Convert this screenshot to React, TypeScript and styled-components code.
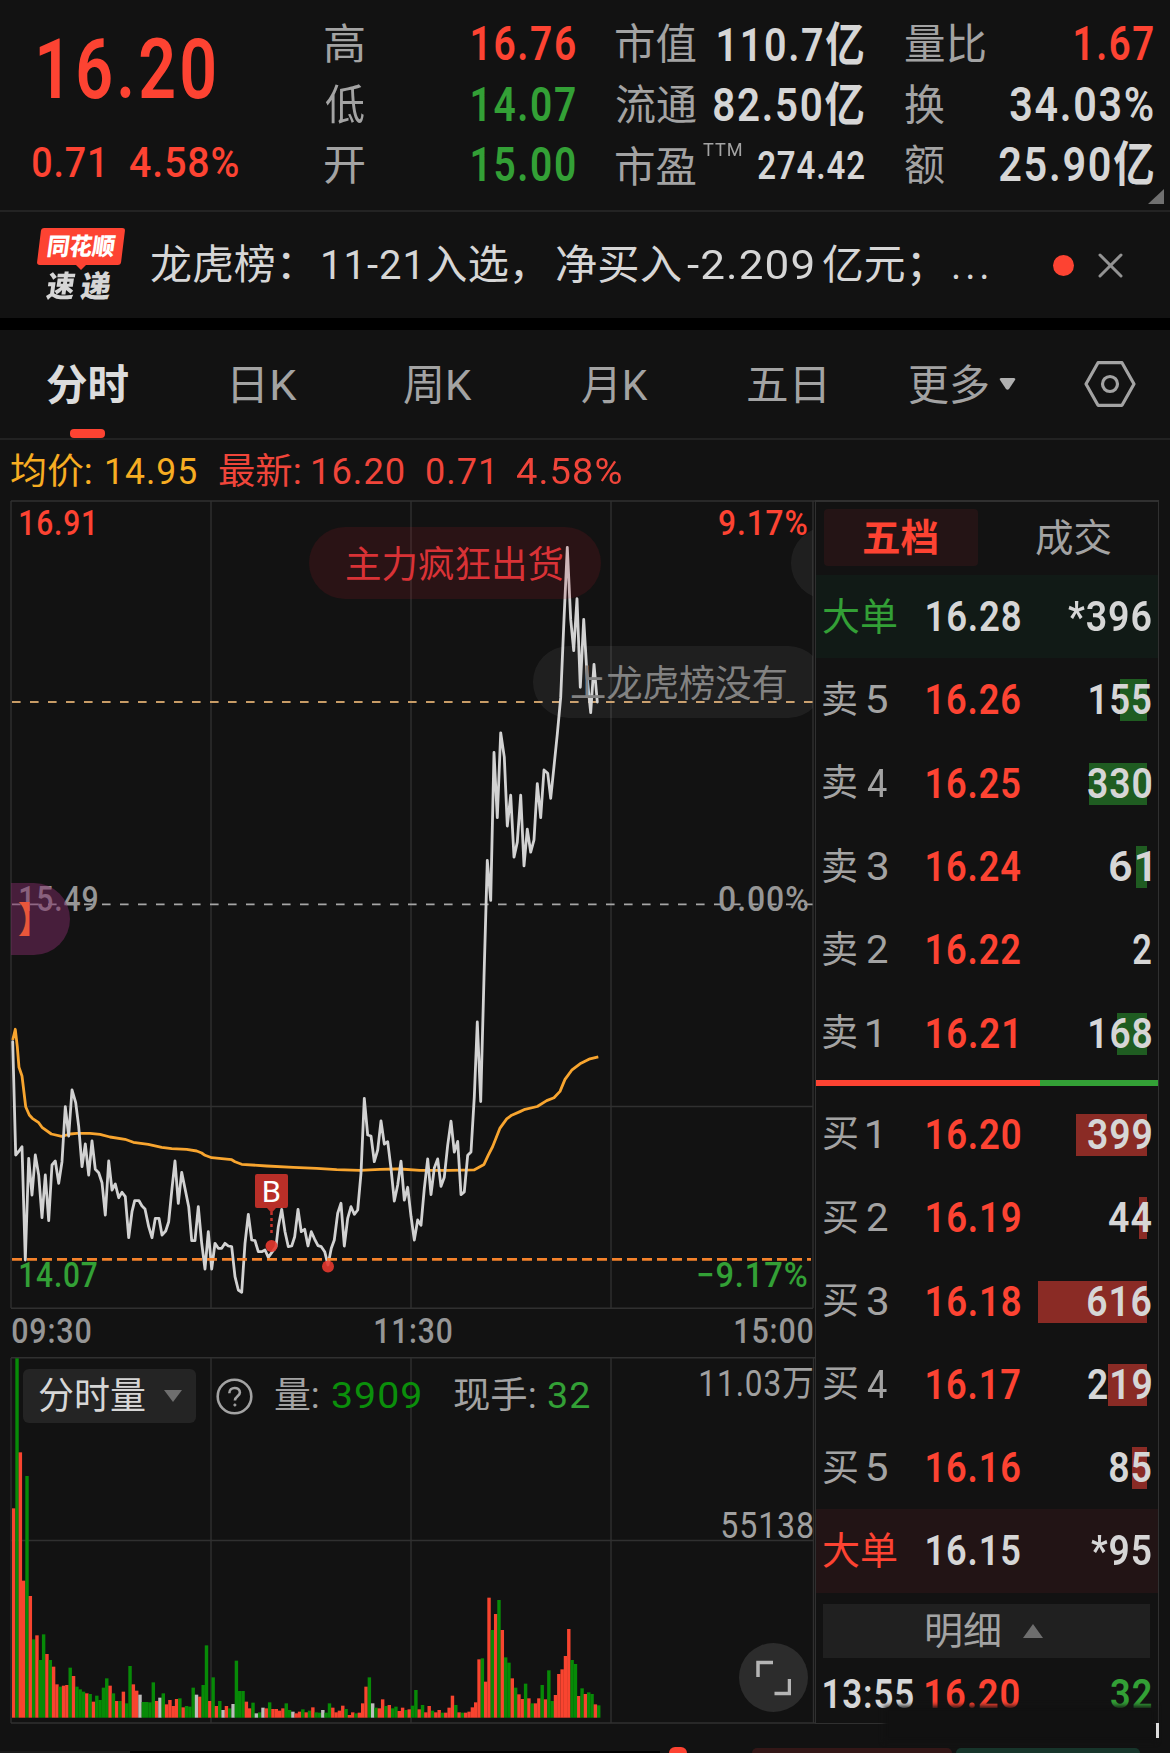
import React, { useLayoutEffect, useRef, useState } from "react";
import styled, { createGlobalStyle } from "styled-components";

const FONT = 'Roboto, "Noto Sans CJK SC", sans-serif';
const RED = "#fd4332";
const GREEN = "#33a036";
const LIGHT = "#d6d6d6";
const GRAY = "#a3a3a3";

const GlobalStyle = createGlobalStyle`
  * { box-sizing: border-box; }
  html, body { margin: 0; background: #121212; }
  body { font-family: ${FONT}; overflow: hidden; }
`;

/* ---------- condensed text fitted to a given ink width ---------- */

const FitBox = styled.span<{ $w: number; $size: number }>`
  display: block;
  flex: none;
  width: ${(p) => p.$w}px;
  height: ${(p) => p.$size}px;
  white-space: pre;
`;

const FitInk = styled.span<{ $size: number; $weight: number; $color: string; $ls: number }>`
  display: inline-block;
  transform-origin: 0 50%;
  font-size: ${(p) => p.$size}px;
  line-height: ${(p) => p.$size}px;
  font-weight: ${(p) => p.$weight};
  letter-spacing: ${(p) => p.$ls}px;
  color: ${(p) => p.$color};
`;

type TxtProps = { t: string; w: number; size?: number; weight?: number; color?: string; ls?: number };

function Txt({ t, w, size = 42, weight = 400, color = LIGHT, ls = 0 }: TxtProps) {
  const ref = useRef<HTMLSpanElement>(null);
  const [transform, setTransform] = useState("none");
  useLayoutEffect(() => {
    const ctx = document.createElement("canvas").getContext("2d") as any;
    ctx.font = `${weight} ${size}px ${FONT}`;
    ctx.letterSpacing = `${ls}px`;
    const m = ctx.measureText(t);
    const ink = m.actualBoundingBoxRight + m.actualBoundingBoxLeft;
    const s = w / ink;
    setTransform(`translateX(${m.actualBoundingBoxLeft * s}px) scaleX(${s})`);
  }, [t, w, size, weight, ls]);
  return (
    <FitBox $w={w} $size={size}>
      <FitInk ref={ref} $size={size} $weight={weight} $color={color} $ls={ls} style={{ transform }}>
        {t}
      </FitInk>
    </FitBox>
  );
}

/* ---------- page ---------- */

const Page = styled.div`
  width: 1170px;
  height: 1753px;
  overflow: hidden;
  background: #121212;
  display: flex;
  flex-direction: column;
`;

/* ---------- quote header ---------- */

const Header = styled.header`
  position: relative;
  height: 212px;
  flex: none;
  display: grid;
  grid-template-columns: 284px 250px 248px 248px;
  column-gap: 41px;
  padding-top: 14px;
  border-bottom: 2px solid #232323;
`;

const PriceBlock = styled.div`
  display: flex;
  flex-direction: column;
  padding: 14px 0 0 39px;
  gap: 29px;
`;

const ChangeRow = styled.div`
  display: flex;
  gap: 28px;
  margin-left: -6px;
`;

const StatCol = styled.div`
  display: flex;
  flex-direction: column;
`;

const StatRow = styled.div<{ $drop?: number }>`
  height: 60.5px;
  padding-top: ${(p) => p.$drop || 0}px;
  display: flex;
  align-items: center;
  justify-content: space-between;
  > :first-child {
    margin-top: 2px;
  }
`;

const Label = styled.div`
  display: flex;
  align-items: flex-start;
  gap: 7px;
`;

const Sup = styled.div`
  margin-top: -7px;
`;

const Corner = styled.svg`
  position: absolute;
  right: 6px;
  bottom: 6px;
`;

/* ---------- news strip ---------- */

const News = styled.section`
  height: 118px;
  flex: none;
  display: flex;
  align-items: center;
  padding-left: 37px;
  border-bottom: 12px solid #000;
`;

const Brand = styled.div`
  width: 88px;
  height: 74px;
  margin-right: 26px;
  display: flex;
  flex-direction: column;
`;

const BrandTop = styled.div`
  position: relative;
  height: 37px;
  display: flex;
  align-items: center;
  justify-content: center;
  &::before {
    content: "";
    position: absolute;
    inset: 0 2px;
    border-radius: 3px;
    background: ${RED};
    transform: skewX(-7deg);
  }
  &::after {
    content: "";
    position: absolute;
    left: 38px;
    top: 36px;
    border: 6px solid transparent;
    border-top-color: ${RED};
    border-bottom: 0;
  }
`;

const Slant = styled.div`
  position: relative;
  z-index: 1;
  transform: skewX(-8deg);
`;

const BrandBottom = styled.div`
  display: flex;
  gap: 6px;
  padding: 7px 0 0 10px;
`;

const Headline = styled.div`
  display: flex;
  width: 902px;
  align-items: center;
`;

const Gap = styled.i<{ $w: number }>`
  flex: none;
  width: ${(p) => p.$w}px;
`;

const Dot = styled.i`
  width: 21px;
  height: 21px;
  border-radius: 50%;
  background: ${RED};
  margin-right: 24px;
`;

/* ---------- period tabs ---------- */

const Tabs = styled.nav`
  height: 110px;
  flex: none;
  display: flex;
  padding-left: 47px;
  align-items: stretch;
  border-bottom: 2px solid #222;
`;

const Tab = styled.div<{ $gap: number }>`
  position: relative;
  display: flex;
  align-items: center;
  gap: 11px;
  margin-right: ${(p) => p.$gap}px;
  > span {
    margin-top: 4px;
  }
`;

const Underline = styled.i`
  position: absolute;
  left: 23px;
  bottom: 0;
  width: 35px;
  height: 9px;
  border-radius: 4px;
  background: ${RED};
`;

const Legend = styled.div`
  height: 60px;
  flex: none;
  display: flex;
  align-items: center;
  padding: 3px 0 0 11px;
`;

/* ---------- board ---------- */

const Board = styled.main`
  display: flex;
  height: 1224px;
  flex: none;
`;

const ChartCol = styled.section`
  width: 815px;
  flex: none;
`;

const Plot = styled.div<{ $h: number }>`
  position: relative;
  height: ${(p) => p.$h}px;
  overflow: hidden;
  svg { display: block; }
`;

const Mark = styled.div<{ $x: number; $y: number }>`
  position: absolute;
  left: ${(p) => p.$x}px;
  top: ${(p) => p.$y}px;
  transform: translateY(-50%);
`;

const Danmu = styled.div<{ $x: number; $y: number; $w: number; $bg: string; $pad: number }>`
  position: absolute;
  left: ${(p) => p.$x}px;
  top: ${(p) => p.$y}px;
  width: ${(p) => p.$w}px;
  height: 72px;
  border-radius: 36px;
  padding: 4px 0 0 ${(p) => p.$pad}px;
  display: flex;
  align-items: center;
  background: ${(p) => p.$bg};
`;

const DanmuLayer = styled.div`
  position: absolute;
  left: 11px;
  top: 0;
  width: 802px;
  height: 808px;
  overflow: hidden;
`;

const TimeAxis = styled.div`
  height: 48px;
  display: flex;
  align-items: center;
  justify-content: space-between;
  padding: 0 2px 3px 12px;
`;

const VolumeBar = styled.div`
  position: absolute;
  left: 23px;
  top: 12px;
  height: 54px;
  display: flex;
  align-items: center;
`;

const Picker = styled.div`
  width: 173px;
  height: 54px;
  border-radius: 6px;
  background: #242424;
  display: flex;
  align-items: center;
  justify-content: space-between;
  padding: 0 14px 0 16px;
  margin-right: 20px;
`;

const Expand = styled.div`
  position: absolute;
  left: 739px;
  top: 286px;
  width: 69px;
  height: 69px;
  border-radius: 50%;
  background: #2c2c2c;
  display: grid;
  place-items: center;
`;

/* ---------- order book ---------- */

const Book = styled.aside`
  position: relative;
  width: 344px;
  border: 1px solid #303030;
  border-top-width: 2px;
  border-left-width: 1px;
`;

const BookTabs = styled.div`
  display: flex;
  height: 73px;
  padding: 7px 0 0 8px;
`;

const BookTab = styled.div<{ $on?: boolean }>`
  flex: none;
  width: ${(p) => (p.$on ? 154 : 190)}px;
  height: 57px;
  border-radius: 4px;
  background: ${(p) => (p.$on ? "#241415" : "transparent")};
  display: flex;
  align-items: center;
  justify-content: center;
`;

const BookRow = styled.div<{ $bg?: string }>`
  height: 83.3px;
  display: grid;
  grid-template-columns: 104px 94px 1fr;
  align-items: center;
  padding: 1px 7px 0 7px;
  background: ${(p) => p.$bg || "transparent"};
`;

const LevelName = styled.div`
  display: flex;
  align-items: center;
  gap: 10px;
`;

const Qty = styled.div`
  position: relative;
  height: 42px;
  display: flex;
  align-items: center;
  justify-content: flex-end;
`;

const Depth = styled.i<{ $color: string }>`
  position: absolute;
  right: 4px;
  top: 0;
  height: 42px;
  background: ${(p) => p.$color};
`;

const Over = styled.div`
  position: relative;
`;

const Ratio = styled.div`
  height: 6px;
  margin: 5px 0 7px;
  display: flex;
  background: ${GREEN};
  &::before {
    content: "";
    width: 224px;
    background: ${RED};
  }
`;

const Detail = styled.div`
  height: 54px;
  margin: 11px 8px 16px 7px;
  background: #202020;
  display: flex;
  align-items: center;
  justify-content: center;
  gap: 23px;
  padding-right: 4px;
`;

const TradeRow = styled.div`
  display: flex;
  align-items: center;
  padding: 0 7px 0 8px;
`;

const Smudge = styled.div`
  position: absolute;
  left: 68px;
  top: 1204px;
  width: 272px;
  height: 36px;
  background: #111;
  filter: blur(2.5px);
`;

const Tick = styled.i`
  position: absolute;
  left: 340px;
  top: 1221px;
  width: 3px;
  height: 15px;
  background: #ddd;
`;

/* ---------- bottom bar ---------- */

const Bottom = styled.footer`
  position: relative;
  z-index: 2;
  display: flex;
  align-items: flex-end;
  height: 29px;
  flex: none;
`;

const Stub = styled.i<{ $w: number; $h: number; $c: string; $ml?: number; $r?: number }>`
  width: ${(p) => p.$w}px;
  height: ${(p) => p.$h}px;
  margin-left: ${(p) => p.$ml || 0}px;
  background: ${(p) => p.$c};
  border-radius: ${(p) => p.$r || 0}px ${(p) => p.$r || 0}px 0 0;
`;

/* ---------- chart data ---------- */

const EARLY = "38,545 47,885 57,873 66,860 76,1200 86,895 96,1005 106,885 116,945 126,1073 136,945 146,1082 156,915 166,903 176,970 186,905 196,740 206,828 216,690 227,728 236,800 246,920 256,852 266,945 276,843 286,928 296,938 306,968 316,1065 326,903 336,990 346,972 356,1013 366,997 376,1010 386,1133 396,1055 404,1022 417,1022 426,1038 435,1047 446,1100 456,1133 466,1075 477,1075 486,1125 497,1113 506,1085 516,985 525,903 535,1030 545,937 556,990 566,1040 575,1142 585,1142 595,1040 605,1150 615,1227 625,1115 635,1227 645,1150 655,1165 665,1165 675,1150 685,1158 695,1160 705,1250 715,1290 725,1297 735,1150 745,1063 755,1140 765,1142 775,1175 785,1175 795,1170 805,1192 815,1178 828,1160 835,1100 845,1048 855,1115 865,1160 875,1158 884,1130 894,1048 904,1115 914,1108 924,1158 934,1115 944,1138 954,1157 964,1160 974,1175 984,1215 994,1165 1003,1140 1013,1060 1023,1030 1033,1158 1043,1075 1053,1040 1063,1063 1073,1050 1083,940 1093,715 1103,825 1113,828 1123,905 1133,870 1143,783 1153,852 1163,845 1173,925 1183,1023 1193,975";
const LATE = "3,1440 13,1525 23,1497 33,1560 43,1612 53,1568 63,1580 73,1500 83,1435 93,1513 103,1455 113,1435 123,1495 133,1475 143,1405 153,1353 163,1420 173,1397 183,1513 193,1507 203,1427 213,1420 223,1300 232,1137 242,1310 252,1040 262,785 272,872 282,550 292,692 302,507 313,560 322,710 332,643 342,778 352,745 362,643 372,797 382,717 392,767 402,740 412,618 422,692 432,588 443,595 452,650 462,580 472,510 482,430 492,260 502,103 512,260 521,328 531,215 541,408 551,260 562,390 572,463 582,358 592,440";
const AVG_EARLY = "38,540 46,508 52,560 57,622 66,648 77,740 88,765 97,775 116,788 126,802 154,822 185,829 210,822 230,820 270,820 300,823 330,831 375,838 400,847 445,853 485,862 515,866 560,868 590,873 605,879 615,886 635,893 695,899 705,905 725,913 800,918 880,922 950,925 1010,929 1080,931 1140,928 1190,927";
const AVG_LATE = "0,1457 60,1460 150,1460 222,1459 252,1447 265,1427 278,1408 300,1368 320,1348 335,1340 360,1332 375,1327 412,1321 440,1308 462,1302 480,1288 495,1262 515,1242 540,1228 570,1217 595,1213";

const series = (early: string, late: string) => {
  const map = (s: string, f: (x: number, y: number) => [number, number]) =>
    s.split(" ").map((p) => {
      const [x, y] = p.split(",").map(Number);
      return f(x, y).map((n) => n.toFixed(1)).join(",");
    });
  return [
    ...map(early, (x, y) => [x / 3, y / 3 + 360]),
    ...map(late, (x, y) => [x / 3 + 400, y / 2.178]),
  ].join(" ");
};

const VOLUMES = "r505 g55 r337 r722 g408 r768 g898 r886 g960 g883 r942 g960 r980 r1033 g1040 r1037 r1035 g983 r1008 g1040 g1048 g1055 r1060 g1062 r1085 g1067 g1080 g1043 g1015 r1037 g1060 r1083 g1083 r1055 g1090 g978 r1033 r1052 w1064 g1086 g1086 g1087 g1027 r1083 w1073 g1060 r1093 r1080 r1098 r1077 g1075 r1102 g1098 g1100 g1043 w1064 r1070 g1035 g916 r1083 g1012 r1098 g1083 w1110 r1098 g1105 w1092 g962 g1053 g1053 r1085 r1105 g1088 w1120 g1117 w1103 r1105 g1087 r1107 r1107 r1112 r1105 g1090 g1110 w1115 r1120 r1115 g1108 r1117 g1112 r1102 g1117 g1118 w1110 g1118 g1090 r1103 r1117 r1112 r1097 g1107 r1125 r1117 g1120 r1118 r1090 r1040 g1012 w1090 g1103 r1105 r1078 g1098 r1095 g1105 g1100 r1113 r1103 g1110 r1108 g1097 g1050 r1108 g1095 r1117 r1098 g1112 r1117 r1110 g1118 r1118 r1103 r1067 g1095 r1117 g1118 r1118 r1115 r1102 r1087 r958 g955 r1025 r773 g870 r822 g780 r870 g952 g968 r1015 g1043 r1063 r1077 g1031 r1075 g1090 r1090 r1075 g1035 r1078 g991 g1083 r1065 r1002 r988 r948 r867 g960 g972 r1068 g1045 r1062 g1057 g1062 r1093 g1096".split(" ");
const VOL_STEP = (1791 - 36) / 3 / (VOLUMES.length - 1);
const VOL_COLORS: Record<string, string> = { r: "#f8442f", g: "#078a07", w: "#bdbdbd" };

const SELLS: [string, string, number, number][] = [
  ["5", "16.26", 155, 61],
  ["4", "16.25", 330, 63],
  ["3", "16.24", 61, 41],
  ["2", "16.22", 2, 18],
  ["1", "16.21", 168, 61],
];
const BUYS: [string, string, number, number][] = [
  ["1", "16.20", 399, 63],
  ["2", "16.19", 44, 42],
  ["3", "16.18", 616, 63],
  ["4", "16.17", 219, 63],
  ["5", "16.16", 85, 41],
];

function Level({ side, row }: { side: string; row: [string, string, number, number] }) {
  const [n, price, qty, w] = row;
  return (
    <BookRow>
      <LevelName>
        <Txt t={side} w={34} size={37} color={GRAY} />
        <Txt t={n} w={n === "1" ? 12 : 20} size={38} color={GRAY} />
      </LevelName>
      <Txt t={price} w={price.endsWith("1") ? 89 : 93} size={42} weight={600} color={RED} ls={1} />
      <Qty>
        {qty > 2 && <Depth $color={side === "卖" ? "#1f5c21" : "#8a2b25"} style={{ width: qty * 0.177 }} />}
        <Over>
          <Txt t={String(qty)} w={w} size={42} weight={600} ls={1} />
        </Over>
      </Qty>
    </BookRow>
  );
}

function BigOrder({ color, bg, price, qty, w }: { color: string; bg: string; price: string; qty: string; w: number }) {
  return (
    <BookRow $bg={bg}>
      <Txt t="大单" w={74} size={38} color={color} />
      <Txt t={price} w={93} size={42} weight={600} ls={1} />
      <Qty>
        <Txt t={qty} w={w} size={42} weight={600} ls={1} />
      </Qty>
    </BookRow>
  );
}

const grid = { stroke: "#303030", strokeWidth: 1.4 };

function PriceChart() {
  return (
    <Plot $h={809}>
      <svg width="815" height="809" fill="none">
        <path d="M11 1H815M11 808.3H813M11 1V808M211 1V808M411 1V808M611 1V808M813 1V808M11 606.5H813" {...grid} />
        <path d="M12 202H813" stroke="#c89c66" strokeWidth="1.8" strokeDasharray="8.6 9.4" />
        <path d="M12 404.4H813" stroke="#a6a6a6" strokeWidth="1.7" strokeDasharray="8.6 9.4" />
        <polyline points={series(AVG_EARLY, AVG_LATE)} stroke="#f8a52f" strokeWidth="2.8" strokeLinejoin="round" />
        <polyline points={series(EARLY, LATE)} stroke="#d2d2d2" strokeWidth="2.8" strokeLinejoin="round" strokeLinecap="round" />
        <path d="M12 759.3H811" stroke="#f5822b" strokeWidth="2.8" strokeDasharray="10 5" />
        <path d="M271.5 712V736" stroke="#c5342c" strokeWidth="2.5" strokeDasharray="3 3" />
        <path d="M257 674H286Q288 674 288 676V705Q288 708 286 708H276L271.5 713L267 708H257Q255 708 255 706V676Q255 674 257 674Z" fill="#b92f28" />
        <circle cx="271.5" cy="746" r="6" fill="#e5382f" fillOpacity="0.9" />
        <circle cx="328" cy="766.5" r="6" fill="#e5382f" fillOpacity="0.9" />
      </svg>
      <Mark $x={20} $y={22.5}><Txt t="16.91" w={73} size={35} weight={500} color={RED} ls={1} /></Mark>
      <Mark $x={719} $y={22.5}><Txt t="9.17%" w={88} size={35} weight={500} color={RED} ls={1} /></Mark>
      <Mark $x={20} $y={399}><Txt t="15.49" w={77} size={35} weight={500} color="#969696" ls={1} /></Mark>
      <Mark $x={719} $y={399}><Txt t="0.00%" w={89} size={35} weight={500} color="#969696" ls={1} /></Mark>
      <Mark $x={20} $y={775}><Txt t="14.07" w={77} size={35} weight={500} color={GREEN} ls={1} /></Mark>
      <Mark $x={698} $y={775}><Txt t="−9.17%" w={109} size={35} weight={500} color={GREEN} ls={1} /></Mark>
      <Mark $x={264} $y={692}><Txt t="B" w={16} size={29} color="#fff" /></Mark>
      <DanmuLayer>
        <Danmu $x={297.5} $y={27} $w={292} $pad={38} $bg="rgba(180,30,40,0.15)">
          <Txt t="主力疯狂出货" w={215} size={37} color="#d93236" />
        </Danmu>
        <Danmu $x={780} $y={27} $w={200} $pad={0} $bg="rgba(255,255,255,0.06)" />
        <Danmu $x={522} $y={146} $w={291} $pad={38} $bg="rgba(255,255,255,0.06)">
          <Txt t="上龙虎榜没有" w={215} size={37} color="#828282" />
        </Danmu>
        <Danmu $x={-80} $y={383} $w={139} $pad={88} $bg="rgba(124,42,100,0.5)">
          <Txt t="】" w={11} size={36} weight={700} color="#e9563a" />
        </Danmu>
      </DanmuLayer>
    </Plot>
  );
}

function VolumeChart() {
  return (
    <Plot $h={367}>
      <svg width="815" height="367" fill="none">
        <path d="M11 .7H815M11 366H815M11 1V366M211 1V366M411 1V366M611 1V366M813.5 1V366M11 183.5H813" {...grid} />
        {VOLUMES.map((v, i) => {
          const y = Number(v.slice(1)) / 3 - 17;
          return <rect key={i} x={12 + i * VOL_STEP} y={y} width={VOL_STEP + 0.1} height={360.7 - y} fill={VOL_COLORS[v[0]]} />;
        })}
      </svg>
      <VolumeBar>
        <Picker>
          <Txt t="分时量" w={106} size={37} />
          <svg width="18" height="12"><path d="M0 0H18L9 12Z" fill="#6e6e6e" /></svg>
        </Picker>
        <svg width="37" height="37" viewBox="0 0 37 37" fill="none" stroke={GRAY} strokeWidth="2.6">
          <circle cx="18.5" cy="18.5" r="16.8" />
          <path d="M13.3 15.2C13.3 8.2 23.9 8.4 23.9 14.6C23.9 18.4 18.9 18.3 18.9 22.6" />
          <circle cx="18.9" cy="27" r="1.1" fill={GRAY} strokeWidth="1" />
        </svg>
        <Gap $w={22} />
        <Txt t="量:" w={43} size={36} color={GRAY} />
        <Gap $w={14} />
        <Txt t="3909" w={88} size={36} color="#0b8f0b" ls={1} />
        <Gap $w={34} />
        <Txt t="现手:" w={81} size={36} color={GRAY} />
        <Gap $w={13} />
        <Txt t="32" w={41} size={36} color={GREEN} ls={1} />
      </VolumeBar>
      <Mark $x={701} $y={27}><Txt t="11.03万" w={111} size={36} color="#a0a0a0" ls={1} /></Mark>
      <Mark $x={722} $y={168.5}><Txt t="55138" w={91} size={36} color="#a0a0a0" ls={1} /></Mark>
      <Expand>
        <svg width="35" height="36" fill="none" stroke="#b5b5b5" strokeWidth="3.5">
          <path d="M2 17V2.5H17M33.5 19V33.5H18.5" />
        </svg>
      </Expand>
    </Plot>
  );
}

export default function App() {
  return (
    <Page>
      <GlobalStyle />
      <Header>
        <PriceBlock>
          <Txt t="16.20" w={175} size={84} weight={600} color={RED} ls={4} />
          <ChangeRow>
            <Txt t="0.71" w={69} size={43} weight={500} color={RED} ls={1} />
            <Txt t="4.58%" w={108} size={43} weight={500} color={RED} ls={1} />
          </ChangeRow>
        </PriceBlock>
        <StatCol>
          <StatRow><Txt t="高" w={39} color={GRAY} /><Txt t="16.76" w={103} size={48} weight={600} color={RED} ls={2} /></StatRow>
          <StatRow><Txt t="低" w={39} color={GRAY} /><Txt t="14.07" w={103} size={48} weight={600} color={GREEN} ls={2} /></StatRow>
          <StatRow><Txt t="开" w={39} color={GRAY} /><Txt t="15.00" w={103} size={48} weight={600} color={GREEN} ls={2} /></StatRow>
        </StatCol>
        <StatCol>
          <StatRow><Txt t="市值" w={80} color={GRAY} /><Txt t="110.7亿" w={146} size={47} weight={600} ls={2} /></StatRow>
          <StatRow><Txt t="流通" w={80} color={GRAY} /><Txt t="82.50亿" w={150} size={47} weight={600} ls={2} /></StatRow>
          <StatRow $drop={3}>
            <Label><Txt t="市盈" w={80} color={GRAY} /><Sup><Txt t="TTM" w={39} size={19} color={GRAY} ls={1} /></Sup></Label>
            <Txt t="274.42" w={106} size={39} weight={600} ls={1} />
          </StatRow>
        </StatCol>
        <StatCol>
          <StatRow><Txt t="量比" w={80} color={GRAY} /><Txt t="1.67" w={78} size={48} weight={600} color={RED} ls={2} /></StatRow>
          <StatRow><Txt t="换" w={39} color={GRAY} /><Txt t="34.03%" w={143} size={48} weight={600} ls={2} /></StatRow>
          <StatRow><Txt t="额" w={39} color={GRAY} /><Txt t="25.90亿" w={154} size={48} weight={600} ls={2} /></StatRow>
        </StatCol>
        <Corner width="16" height="15"><path d="M16 0V15H0Z" fill="#707070" /></Corner>
      </Header>

      <News>
        <Brand>
          <BrandTop><Slant><Txt t="同花顺" w={67} size={24} weight={900} color="#fff" /></Slant></BrandTop>
          <BrandBottom>
            <Slant><Txt t="速" w={28} size={30} weight={900} /></Slant>
            <Slant><Txt t="递" w={30} size={30} weight={900} /></Slant>
          </BrandBottom>
        </Brand>
        <Headline>
          <Txt t="龙虎榜：" w={139} size={41} />
          <Gap $w={33} />
          <Txt t="11-21" w={94} size={41} ls={1} />
          <Gap $w={10} />
          <Txt t="入选，" w={96} size={41} />
          <Gap $w={33} />
          <Txt t="净买入" w={125} size={41} />
          <Gap $w={6} />
          <Txt t="-2.209" w={126} size={41} ls={1} />
          <Gap $w={10} />
          <Txt t="亿元；" w={98} size={41} />
          <Gap $w={32} />
          <Txt t="..." w={34} size={41} ls={4} />
        </Headline>
        <Dot />
        <svg width="25" height="25" stroke="#939393" strokeWidth="3" strokeLinecap="round"><path d="M2 2L23 23M23 2L2 23" /></svg>
      </News>

      <Tabs>
        <Tab $gap={105}><Txt t="分时" w={81} weight={700} color="#dcdcdc" /><Underline /></Tab>
        <Tab $gap={107}><Txt t="日K" w={64} color={GRAY} /></Tab>
        <Tab $gap={110}><Txt t="周K" w={68} color={GRAY} /></Tab>
        <Tab $gap={100}><Txt t="月K" w={66} color={GRAY} /></Tab>
        <Tab $gap={85}><Txt t="五日" w={76} color={GRAY} /></Tab>
        <Tab $gap={68}>
          <Txt t="更多" w={79} color={GRAY} />
          <svg width="17" height="12"><path d="M2 0H15Q17 .5 16 2L10 11Q8.500 12.500 7 11L1 2Q0 .5 2 0Z" fill="#b0b0b0" /></svg>
        </Tab>
        <Tab $gap={0}>
          <svg width="52" height="46" fill="none" stroke={GRAY} strokeWidth="3.2">
            <path d="M14 1.700H38L50 23L38 44.300H14L2 23Z" strokeLinejoin="round" />
            <circle cx="26" cy="23" r="7.500" />
          </svg>
        </Tab>
      </Tabs>

      <Legend>
        <Txt t="均价:" w={80} size={36} color="#f7ad22" />
        <Gap $w={16} />
        <Txt t="14.95" w={89} size={36} color="#f7ad22" ls={1} />
        <Gap $w={23} />
        <Txt t="最新:" w={81} size={36} color="#f0453a" />
        <Gap $w={13} />
        <Txt t="16.20" w={91} size={36} color="#f0453a" ls={1} />
        <Gap $w={23} />
        <Txt t="0.71" w={64} size={36} color="#f0453a" ls={1} />
        <Gap $w={25} />
        <Txt t="4.58%" w={105} size={36} color="#f0453a" ls={1} />
      </Legend>

      <Board>
        <ChartCol>
          <PriceChart />
          <TimeAxis>
            <Txt t="09:30" w={79} size={35} weight={500} color="#969696" ls={1} />
            <Txt t="11:30" w={77} size={35} weight={500} color="#969696" ls={1} />
            <Txt t="15:00" w={78} size={35} weight={500} color="#969696" ls={1} />
          </TimeAxis>
          <VolumeChart />
        </ChartCol>
        <Book>
          <BookTabs>
            <BookTab $on><Txt t="五档" w={74} size={38} weight={700} color={RED} /></BookTab>
            <BookTab><Txt t="成交" w={75} size={38} color={GRAY} /></BookTab>
          </BookTabs>
          <BigOrder color={GREEN} bg="#111a16" price="16.28" qty="*396" w={83} />
          {SELLS.map((r) => <Level key={r[0]} side="卖" row={r} />)}
          <Ratio />
          {BUYS.map((r) => <Level key={r[0]} side="买" row={r} />)}
          <BigOrder color={RED} bg="#221415" price="16.15" qty="*95" w={60} />
          <Detail>
            <Txt t="明细" w={73} size={38} color={GRAY} />
            <svg width="20" height="14"><path d="M10 0L20 14H0Z" fill="#6e6e6e" /></svg>
          </Detail>
          <TradeRow>
            <Txt t="13:55" w={89} size={41} weight={600} ls={1} />
            <Gap $w={13} />
            <Txt t="16.20" w={93} size={41} weight={600} color={RED} ls={1} />
            <Gap $w={92} />
            <Txt t="32" w={40} size={41} weight={600} color={GREEN} ls={1} />
          </TradeRow>
          <Smudge />
          <Tick />
        </Book>
      </Board>

      <Bottom>
        <Stub $w={130} $h={2} $c="#1a1a1a" />
        <Stub $w={530} $h={2} $c="#000" />
        <Stub $w={18} $h={6} $c={RED} $ml={9} $r={9} />
        <Stub $w={200} $h={5} $c="#331717" $ml={65} $r={5} />
        <Stub $w={184} $h={5} $c="#17352b" $ml={4} $r={5} />
      </Bottom>
    </Page>
  );
}
